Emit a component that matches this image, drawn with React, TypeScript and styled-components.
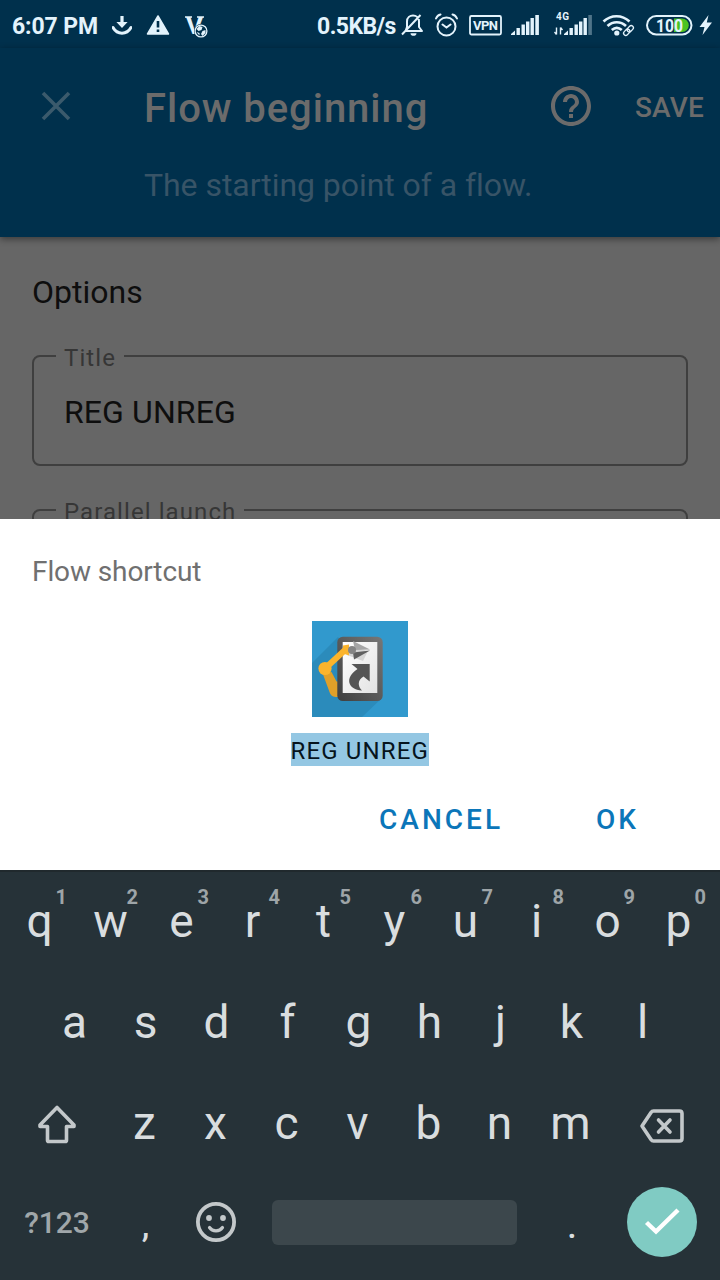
import React from "react";
import styled, { createGlobalStyle } from "styled-components";

const Global = createGlobalStyle`
  * { box-sizing: border-box; }
  body { margin: 0; background: #666; font-family: Roboto, "Liberation Sans", sans-serif; }
  svg { display: block; flex: none; }
`;

const Screen = styled.div`
  width: 720px;
  height: 1280px;
  display: flex;
  flex-direction: column;
  overflow: hidden;
`;

const StatusBar = styled.div`
  height: 48px;
  flex: none;
  display: flex;
  align-items: flex-start;
  padding-left: 12px;
  background: #00304c;
  color: #e3f3fc;
`;

const StatusText = styled.span<{ $width: number; $gap?: number; $spacing?: number }>`
  width: ${(p) => p.$width}px;
  margin-left: ${(p) => p.$gap ?? 0}px;
  flex: none;
  white-space: nowrap;
  font-size: 23px;
  font-weight: 700;
  line-height: 28px;
  padding-top: 13px;
  letter-spacing: ${(p) => p.$spacing ?? 0}px;
`;

const StatusIcon = styled.svg<{ $gap: number }>`
  margin-left: ${(p) => p.$gap}px;
  font-family: Roboto, sans-serif;
  font-weight: 700;
`;

const Header = styled.header`
  height: 189px;
  flex: none;
  background: #00304c;
  color: #6b6b6b;
  z-index: 1;
  box-shadow: 0 2px 7px rgba(0, 0, 0, 0.45);
`;

const HeaderRow = styled.div`
  height: 116px;
  display: flex;
  align-items: center;
  padding: 0 16px 0 40px;
`;

const HeaderTitle = styled.h1`
  margin: 6px 0 0 72px;
  flex: 1;
  font-size: 40px;
  line-height: 48px;
  font-weight: 500;
  letter-spacing: 0.95px;
`;

const SaveButton = styled.button`
  border: 0;
  padding: 4px 0 0;
  margin-left: 40px;
  background: none;
  color: inherit;
  font: 500 28px/34px Roboto, sans-serif;
  letter-spacing: 0.2px;
`;

const Subtitle = styled.p`
  margin: 1px 0 0 144px;
  color: #385467;
  font-size: 32px;
  line-height: 40px;
  letter-spacing: -0.05px;
`;

const Content = styled.main`
  height: 282px;
  flex: none;
  overflow: hidden;
  display: flex;
  flex-direction: column;
  padding: 35px 32px 0;
  background: #666;
  color: #0e0e0e;
`;

const SectionTitle = styled.h2`
  margin: 0 0 28px;
  font-size: 32px;
  line-height: 40px;
  font-weight: 400;
`;

const Field = styled.fieldset`
  height: 126px;
  flex: none;
  margin: 0 0 28px;
  padding: 20px 30px 0;
  border: 2px solid #3f3f3f;
  border-radius: 8px;
  font-size: 32px;
  line-height: 40px;
  letter-spacing: 0.1px;
`;

const Legend = styled.legend`
  margin-left: -8px;
  padding: 4px 8px 0;
  height: 32px;
  font-size: 24px;
  line-height: 28px;
  letter-spacing: 1.08px;
  color: #363636;
`;

const Dialog = styled.section`
  height: 351px;
  flex: none;
  display: flex;
  flex-direction: column;
  align-items: center;
  background: #fff;
`;

const DialogTitle = styled.h3`
  align-self: stretch;
  margin: 36px 32px 32px;
  color: #707070;
  font-size: 28px;
  line-height: 34px;
  font-weight: 400;
  letter-spacing: -0.1px;
`;

const ShortcutName = styled.span`
  margin-top: 16px;
  height: 33px;
  font-size: 24px;
  line-height: 37px;
  letter-spacing: 1.13px;
  text-indent: -0.5px;
  white-space: nowrap;
  background: #94c7e3;
  color: #06141d;
`;

const DialogActions = styled.div`
  align-self: stretch;
  display: flex;
  justify-content: flex-end;
  gap: 93px;
  padding: 37px 81px 0 0;
`;

const DialogButton = styled.button`
  border: 0;
  padding: 0;
  background: none;
  color: #0b76b9;
  font: 500 28px/34px Roboto, sans-serif;
  letter-spacing: 3px;
`;

const Keyboard = styled.section`
  flex: 1;
  background: #263238;
  box-shadow: inset 0 2px 0 #20292d;
  color: #d9dddf;
`;

const KeyRow = styled.div<{ $inset: number; $height?: number }>`
  height: ${(p) => p.$height ?? 101}px;
  display: flex;
  align-items: center;
  padding: 0 ${(p) => p.$inset}px;
`;

const Key = styled.div`
  position: relative;
  width: 71px;
  height: 100%;
  flex: none;
  display: flex;
  align-items: center;
  justify-content: center;
  font-size: 46px;
`;

const KeyHint = styled.sup`
  position: absolute;
  top: 16px;
  right: 8px;
  font-size: 20px;
  line-height: 23px;
  font-weight: 700;
  color: #9ea5a8;
`;

const WideKey = styled.div<{ $width: number; $drop?: number }>`
  width: ${(p) => p.$width}px;
  padding-top: ${(p) => p.$drop ?? 0}px;
  flex: none;
  display: flex;
  justify-content: center;
`;

const SymbolsKey = styled(WideKey)`
  color: #a0a7aa;
  font-size: 30px;
  line-height: 36px;
  font-weight: 500;
`;

const PunctuationKey = styled(WideKey)`
  font-size: 34px;
  line-height: 40px;
  font-weight: 500;
`;

const SpaceBar = styled.div`
  width: 245px;
  height: 45px;
  margin-left: 21px;
  border-radius: 6px;
  background: #3c474c;
`;

const EnterKey = styled.div`
  width: 70px;
  height: 70px;
  flex: none;
  border-radius: 50%;
  display: grid;
  place-items: center;
  background: #80cbc3;
`;

const SignalBars = ({ faded = false }: { faded?: boolean }) => (
  <g fill="currentColor">
    <path d="M0 35v-1l4-3.5V35z" />
    <rect x="5.5" y="28" width="3.4" height="7" />
    <rect x="10.5" y="24.5" width="3.4" height="10.5" />
    <rect x="15" y="21.5" width="3.4" height="13.5" />
    <rect x="19.5" y="18" width="3.4" height="17" />
    <rect x="24.3" y="15" width="3.6" height="20" opacity={faded ? 0.35 : 1} />
  </g>
);

const Status = () => (
  <StatusBar>
    <StatusText $width={88} $spacing={-0.1}>6:07 PM</StatusText>
    <StatusIcon $gap={12} width="20" height="48" viewBox="0 0 20 48" fill="none" stroke="currentColor">
      <path d="M1 27.500C5 35 15 35 19 27.500" strokeWidth="3" strokeLinecap="round" />
      <path d="M8.400 16h3.200v6h4L10 28l-5.600-6h4z" fill="currentColor" stroke="none" />
    </StatusIcon>
    <StatusIcon $gap={14} width="24" height="48" viewBox="0 0 24 48">
      <path d="M12 16l10.500 18h-21z" fill="currentColor" stroke="currentColor" strokeWidth="1.500" strokeLinejoin="round" />
      <path d="M12 21v6.500M12 29.500v2.500" stroke="#00304c" strokeWidth="2.600" />
    </StatusIcon>
    <StatusIcon $gap={14} width="26" height="48" viewBox="0 0 26 48">
      <text x="2" y="33.500" fontSize="23" fill="currentColor" textLength="17" lengthAdjust="spacingAndGlyphs">V</text>
      <path d="M1 17h7M13 17h7" stroke="currentColor" strokeWidth="1.600" />
      <circle cx="17" cy="31" r="7" fill="#00304c" />
      <circle cx="17" cy="31" r="5.900" fill="none" stroke="currentColor" strokeWidth="1.300" />
      <path d="M12.500 29l3-3 3 1-1 3-3 1zM18.500 31l3-1v3l-3 3-1.500-2zM12.500 32l3 1v2.500z" fill="currentColor" />
    </StatusIcon>
    <StatusText $width={80} $gap={107} $spacing={-0.55}>0.5KB/s</StatusText>
    <StatusIcon $gap={4} width="24" height="48" viewBox="0 0 24 48" fill="none" stroke="currentColor" strokeWidth="2">
      <path d="M4.500 31h16.500l-3-4v-5.500c0-8-12-8-12 0V27zM1 34.500L19.500 15" strokeLinejoin="round" />
      <path d="M9.500 33.200h6c0 3.500-6 3.500-6 0z" fill="currentColor" stroke="none" />
    </StatusIcon>
    <StatusIcon $gap={10} width="24" height="48" viewBox="0 0 24 48" fill="none" stroke="currentColor" strokeWidth="2" strokeLinecap="round">
      <circle cx="11.500" cy="26.500" r="9" />
      <path d="M7.500 24.500l4 3 4-3M1 18.500c.8-2 2.300-3.500 4.500-4M22 18.500c-.8-2-2.300-3.500-4.500-4" />
    </StatusIcon>
    <StatusIcon $gap={10} width="34" height="48" viewBox="0 0 34 48">
      <rect x="1" y="16" width="31" height="18.500" rx="1.500" fill="none" stroke="currentColor" strokeWidth="1.800" />
      <text x="4" y="30" fontSize="13" fill="currentColor" textLength="25">VPN</text>
    </StatusIcon>
    <StatusIcon $gap={8} width="29" height="48" viewBox="0 0 29 48"><SignalBars /></StatusIcon>
    <StatusIcon $gap={14} width="39" height="48" viewBox="0 0 39 48">
      <text x="2" y="20" fontSize="10" fill="currentColor" textLength="13">4G</text>
      <path d="M2.500 27.500v7M.5 32l2 2.500M6.500 34.500v-7M6.500 27.500l2 2.500" stroke="currentColor" strokeWidth="1.400" fill="none" />
      <g transform="translate(10 0)"><SignalBars faded /></g>
    </StatusIcon>
    <StatusIcon $gap={9} width="34" height="48" viewBox="0 0 34 48" fill="none" stroke="currentColor">
      <path d="M1.500 21.500C9 14.500 20 14.500 27.500 21.500M5.500 26c5.500-5 13-5 18.500 0M9.800 30c3.500-3 6.500-3 10 0" strokeWidth="2.700" />
      <circle cx="14.800" cy="33" r="2.600" fill="currentColor" stroke="none" />
      <g transform="rotate(-45 26.500 30.500)" strokeWidth="1.300">
        <rect x="20.500" y="28.300" width="7" height="4.400" rx="2.200" />
        <rect x="25.500" y="28.300" width="7" height="4.400" rx="2.200" />
      </g>
    </StatusIcon>
    <StatusIcon $gap={10} width="48" height="48" viewBox="0 0 48 48">
      <rect x="1" y="16" width="44.500" height="18.500" rx="9.250" fill="none" stroke="currentColor" strokeWidth="2" />
      <path d="M28 18.500h8a6.700 6.700 0 010 13.500h-8z" fill="#4cc321" />
      <text x="10" y="31.800" fontSize="18.500" fill="currentColor" textLength="27" lengthAdjust="spacingAndGlyphs">100</text>
    </StatusIcon>
    <StatusIcon $gap={5} width="14" height="48" viewBox="0 0 14 48">
      <path d="M9.500 15L.5 27h5L3.500 35l9.500-12.500H7.800z" fill="currentColor" />
    </StatusIcon>
  </StatusBar>
);

const ShortcutArt = () => (
  <svg width="96" height="96" viewBox="0 0 96 96">
    <defs>
      <linearGradient id="frame" x1="1" y1="0" x2="0" y2="1">
        <stop offset="0" stopColor="#777" />
        <stop offset="1" stopColor="#3e3e3e" />
      </linearGradient>
      <linearGradient id="paper" x1="0" y1="0" x2="1" y2="1">
        <stop offset="0" stopColor="#fff" />
        <stop offset="1" stopColor="#e2e2e2" />
      </linearGradient>
    </defs>
    <path d="M0 0h96v96H0z" fill="#3199cd" />
    <path d="M26 16L0 42v54h50l20-19z" fill="#2b8bbb" />
    <path d="M10.500 52l9-1 5 9.500h2V76h-3c-3.500-.3-5-2-6-5z" fill="#e0a029" />
    <rect x="25.300" y="15.700" width="45.400" height="64.300" rx="5.500" fill="url(#frame)" />
    <path d="M30.700 21h34.600v51H30.700z" fill="url(#paper)" />
    <path d="M35 34l16 6 5-10-16-4z" fill="#d5d5d5" />
    <path d="M13 47.500L33 29" stroke="#fbb42c" strokeWidth="6" />
    <circle cx="13" cy="47.500" r="6.600" fill="#fbb42c" />
    <path d="M31 24.500l6-1v11l-6-2z" fill="#fbb42c" />
    <path d="M41 20l17 8.500-15 .5z" fill="#a6a6a6" />
    <path d="M41 31.500l17-2L42 38.500z" fill="#606060" />
    <circle cx="40" cy="29" r="4" fill="#858585" />
    <path d="M39.500 43H57.700V60.500L51.500 55.500C45.500 59 45.500 65 50 69.500C36 68.500 32 57 45.500 48z" fill="#555" />
  </svg>
);

const letters = (text: string) => text.split("").map((c) => <Key key={c}>{c}</Key>);

export default function App() {
  return (
    <Screen>
      <Global />
      <Status />
      <Header>
        <HeaderRow>
          <svg width="32" height="32" viewBox="0 0 32 32" stroke="#3b5a6c" strokeWidth="3.600">
            <path d="M3 3l26 26M29 3L3 29" />
          </svg>
          <HeaderTitle>Flow beginning</HeaderTitle>
          <svg width="48" height="48" viewBox="0 0 24 24" fill="currentColor">
            <path d="M11 18h2v-2h-2v2zm1-16C6.480 2 2 6.480 2 12s4.480 10 10 10 10-4.480 10-10S17.520 2 12 2zm0 18c-4.410 0-8-3.590-8-8s3.590-8 8-8 8 3.590 8 8-3.590 8-8 8zm0-14c-2.210 0-4 1.790-4 4h2c0-1.100.9-2 2-2s2 .9 2 2c0 2-3 1.750-3 5h2c0-2.250 3-2.500 3-5 0-2.210-1.790-4-4-4z" />
          </svg>
          <SaveButton>SAVE</SaveButton>
        </HeaderRow>
        <Subtitle>The starting point of a flow.</Subtitle>
      </Header>
      <Content>
        <SectionTitle>Options</SectionTitle>
        <Field>
          <Legend>Title</Legend>
          REG UNREG
        </Field>
        <Field>
          <Legend>Parallel launch</Legend>
        </Field>
      </Content>
      <Dialog>
        <DialogTitle>Flow shortcut</DialogTitle>
        <ShortcutArt />
        <ShortcutName>REG UNREG</ShortcutName>
        <DialogActions>
          <DialogButton>CANCEL</DialogButton>
          <DialogButton>OK</DialogButton>
        </DialogActions>
      </Dialog>
      <Keyboard>
        <KeyRow $inset={4}>
          {"qwertyuiop".split("").map((c, i) => (
            <Key key={c}>
              {c}
              <KeyHint>{(i + 1) % 10}</KeyHint>
            </Key>
          ))}
        </KeyRow>
        <KeyRow $inset={39}>{letters("asdfghjkl")}</KeyRow>
        <KeyRow $inset={4}>
          <WideKey $width={105} $drop={2}>
            <svg width="40" height="40" viewBox="0 0 40 40" fill="none" stroke="#c3c8ca" strokeWidth="3.600" strokeLinejoin="round">
              <path d="M20 3.500L3 21v1.500h7.500v13.700q0 1.300 1.300 1.300h16.400q1.300 0 1.300-1.300V22.500H37V21z" />
            </svg>
          </WideKey>
          {letters("zxcvbnm")}
          <WideKey $width={111} $drop={6}>
            <svg width="46" height="36" viewBox="0 0 46 36" fill="none" stroke="#c3c8ca" strokeWidth="3.600" strokeLinejoin="round" strokeLinecap="round">
              <path d="M14.500 3h26q2.500 0 2.500 2.500v25q0 2.500-2.500 2.500h-26q-1.500 0-2.500-1.500L3 18l9-13.500q1-1.500 2.500-1.500z" />
              <path d="M19.500 12l11.500 12M31 12L19.500 24" />
            </svg>
          </WideKey>
        </KeyRow>
        <KeyRow $inset={4} $height={98}>
          <SymbolsKey $width={106} $drop={2}>?123</SymbolsKey>
          <PunctuationKey $width={71} $drop={5}>,</PunctuationKey>
          <WideKey $width={70}>
            <svg width="42" height="42" viewBox="0 0 42 42" fill="none" stroke="#c3c8ca" strokeWidth="3.800" strokeLinecap="round">
              <circle cx="21" cy="21" r="18.100" />
              <path d="M14.500 26.500c3 4.500 10 4.500 13 0" strokeWidth="3.200" />
              <circle cx="14" cy="17" r="2.900" fill="#c3c8ca" stroke="none" />
              <circle cx="28" cy="17" r="2.900" fill="#c3c8ca" stroke="none" />
            </svg>
          </WideKey>
          <SpaceBar />
          <PunctuationKey $width={110} $drop={7}>.</PunctuationKey>
          <EnterKey>
            <svg width="38" height="28" viewBox="0 0 38 28" fill="none" stroke="#fff" strokeWidth="4.400">
              <path d="M3.500 14.500L13 23.500L35 2" />
            </svg>
          </EnterKey>
        </KeyRow>
      </Keyboard>
    </Screen>
  );
}
